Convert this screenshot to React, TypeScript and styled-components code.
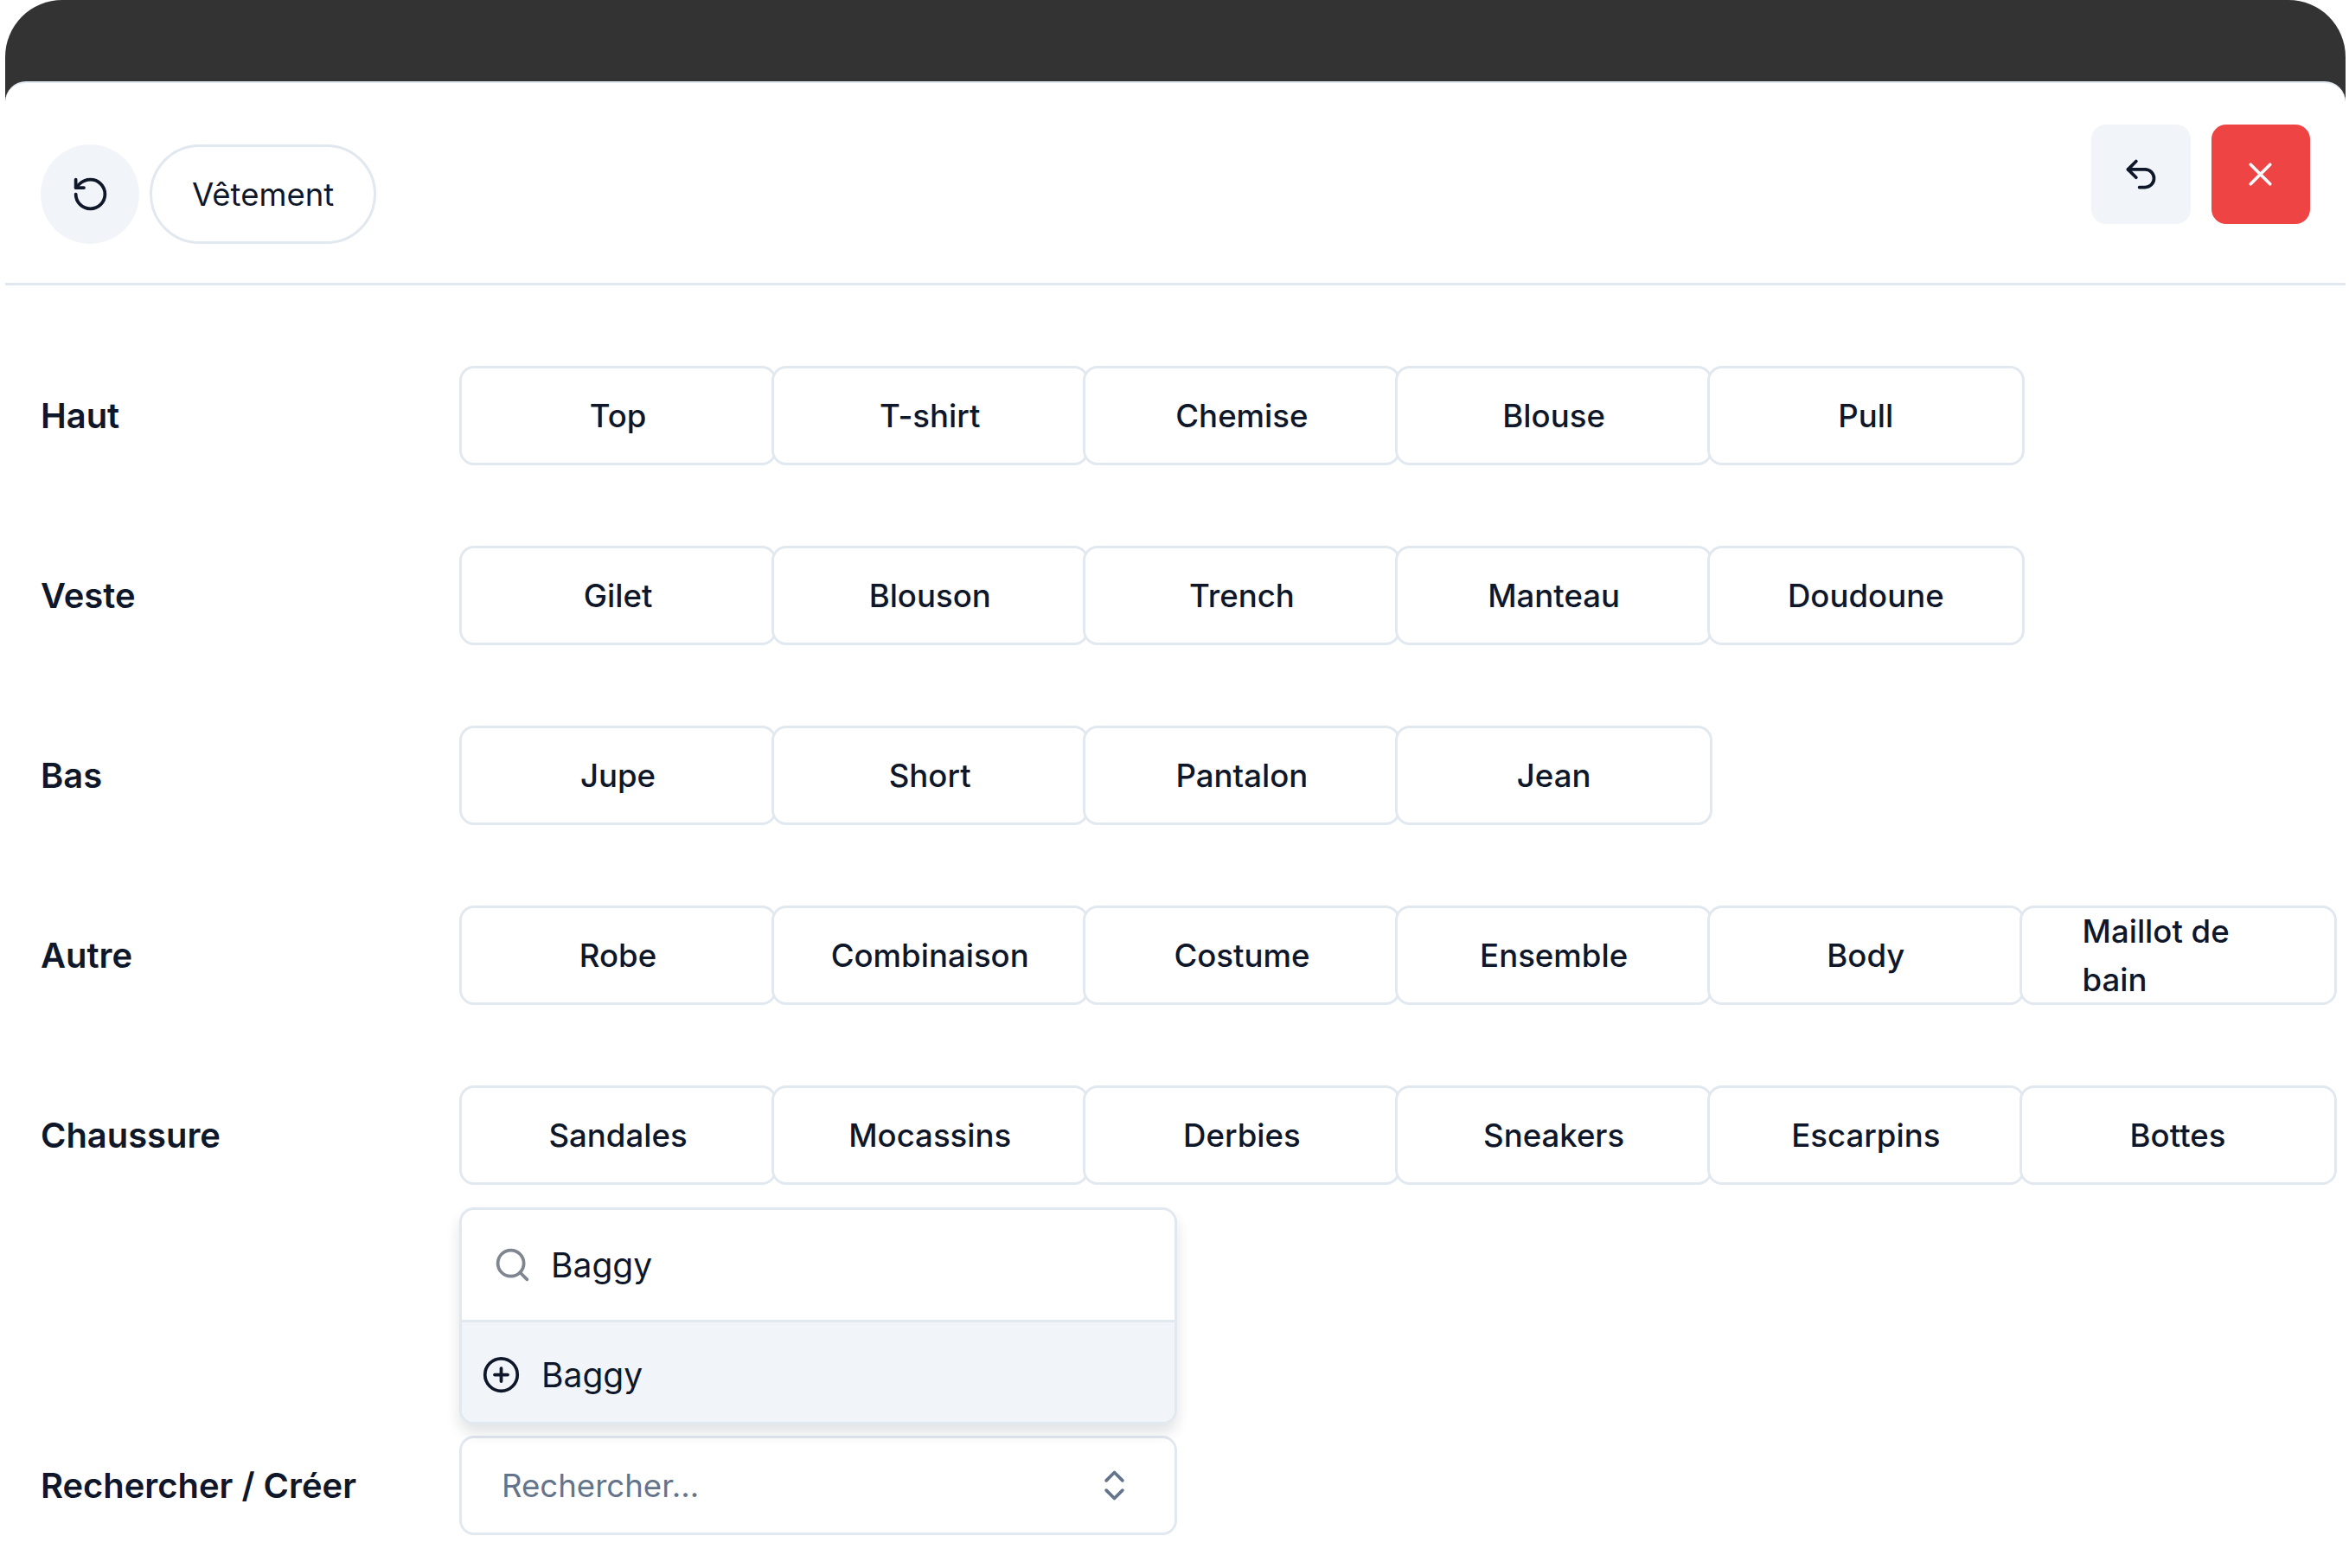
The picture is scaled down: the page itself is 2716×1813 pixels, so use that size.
import styled, { createGlobalStyle } from 'styled-components';
import { ChevronsUpDown, CirclePlus, RotateCcw, Search, Undo2, X } from 'lucide-react';

const categories = [
  { label: 'Haut', items: ['Top', 'T-shirt', 'Chemise', 'Blouse', 'Pull'] },
  { label: 'Veste', items: ['Gilet', 'Blouson', 'Trench', 'Manteau', 'Doudoune'] },
  { label: 'Bas', items: ['Jupe', 'Short', 'Pantalon', 'Jean'] },
  { label: 'Autre', items: ['Robe', 'Combinaison', 'Costume', 'Ensemble', 'Body', 'Maillot de bain'] },
  { label: 'Chaussure', items: ['Sandales', 'Mocassins', 'Derbies', 'Sneakers', 'Escarpins', 'Bottes'] },
];

function App() {
  return (
    <>
      <GlobalStyle />
      <Frame>
        <Panel>
          <Header>
            <HeaderLeft>
              <ResetButton><RotateCcw size={45} strokeWidth={2} /></ResetButton>
              <Pill>Vêtement</Pill>
            </HeaderLeft>
            <HeaderRight>
              <SquareButton><Undo2 size={45} strokeWidth={2} /></SquareButton>
              <SquareButton $danger><X size={45} strokeWidth={2} /></SquareButton>
            </HeaderRight>
          </Header>
          <Body>
            {categories.map((cat) => (
              <Row key={cat.label}>
                <Label>{cat.label}</Label>
                <Options>
                  {cat.items.map((item) => (
                    <Option key={item}>{item}</Option>
                  ))}
                </Options>
              </Row>
            ))}
            <SearchRow>
              <Label>Rechercher / Créer</Label>
              <ComboWrap>
                <Popover>
                  <SearchLine>
                    <SearchIcon size={45} strokeWidth={2} />
                    <span>Baggy</span>
                  </SearchLine>
                  <CreateLine>
                    <CirclePlus size={45} strokeWidth={2} />
                    <span>Baggy</span>
                  </CreateLine>
                </Popover>
                <Combo>
                  <span>Rechercher...</span>
                  <ChevronsUpDown size={45} strokeWidth={2} />
                </Combo>
              </ComboWrap>
            </SearchRow>
          </Body>
        </Panel>
      </Frame>
    </>
  );
}

//*STYLES
const GlobalStyle = createGlobalStyle`
  html, body {
    margin: 0;
    background: #fff;
    color: #0f172a;
    font-family: Inter, "Liberation Sans", sans-serif;
  }
  * { box-sizing: border-box; }
`;

const Frame = styled.main`
  display: flex;
  flex-direction: column;
  height: 1813px;
  margin: 0 4px 0 6px;
  padding-top: 94px;
  background: #333333;
  border-radius: 66px 66px 0 0;
`;

const Panel = styled.div`
  flex: 1;
  background: #fff;
  border-radius: 24px 24px 0 0;
  border-top: 2px solid #e2e8f0;
`;

const Header = styled.header`
  display: flex;
  justify-content: space-between;
  height: 234px;
  padding: 0 41px;
  border-bottom: 3px solid #e2e8f0;
`;

const HeaderLeft = styled.div`
  display: flex;
  align-items: center;
  gap: 12px;
  padding-top: 26px;
  height: 100%;
`;

const HeaderRight = styled.div`
  display: flex;
  gap: 24px;
  padding-top: 48px;
`;

const ResetButton = styled.div`
  display: flex;
  align-items: center;
  justify-content: center;
  width: 114px;
  height: 115px;
  border-radius: 50%;
  background: #f1f5f9;
`;

const Pill = styled.div`
  display: flex;
  align-items: center;
  height: 115px;
  padding: 0 46px;
  border: 3px solid #e2e8f0;
  border-radius: 58px;
  font-size: 36.5px;
  font-weight: 400;
`;

const SquareButton = styled.div<{ $danger?: boolean }>`
  display: flex;
  align-items: center;
  justify-content: center;
  width: 114.5px;
  height: 115px;
  border-radius: 17px;
  background: ${(props) => (props.$danger ? '#ef4444' : '#f1f5f9')};
  color: ${(props) => (props.$danger ? '#f8fafc' : '#0f172a')};
`;

const Body = styled.div`
  display: flex;
  flex-direction: column;
  gap: 93px;
  padding: 93px 0 0 41px;
`;

const Row = styled.section`
  display: flex;
  align-items: center;
`;

const Label = styled.div`
  flex: 0 0 484px;
  font-size: 39.9px;
  font-weight: 600;
`;

const Options = styled.div`
  display: flex;
`;

const Option = styled.div`
  display: flex;
  align-items: center;
  justify-content: center;
  width: 367px;
  height: 115px;
  margin-right: -6.3px;
  padding: 0 70px;
  background: #fff;
  border: 3px solid #e2e8f0;
  border-radius: 17px;
  font-size: 36.6px;
  font-weight: 500;
  line-height: 56px;
`;

const SearchRow = styled(Row)`
  margin-top: 197px;
`;

const ComboWrap = styled.div`
  position: relative;
  width: 830px;
`;

const Combo = styled.div`
  display: flex;
  align-items: center;
  justify-content: space-between;
  height: 115px;
  padding: 0 47px 0 46px;
  border: 3px solid #e2e8f0;
  border-radius: 17px;
  font-size: 36.6px;
  color: #64748b;
`;

const Popover = styled.div`
  position: absolute;
  left: 0;
  right: 0;
  bottom: 128px;
  height: 251px;
  background: #fff;
  border: 3px solid #e2e8f0;
  border-radius: 17px;
  box-shadow: 0 10px 16px rgba(15, 23, 42, 0.12);
  font-size: 39px;
  overflow: hidden;
`;

const SearchLine = styled.div`
  display: flex;
  align-items: center;
  gap: 22px;
  height: 130px;
  padding-left: 36px;
  border-bottom: 3px solid #e2e8f0;
`;

const SearchIcon = styled(Search)`
  color: #7f8690;
`;

const CreateLine = styled.div`
  display: flex;
  align-items: center;
  gap: 24px;
  height: 120px;
  padding-left: 23px;
  background: #f1f5f9;
`;

export default App;
